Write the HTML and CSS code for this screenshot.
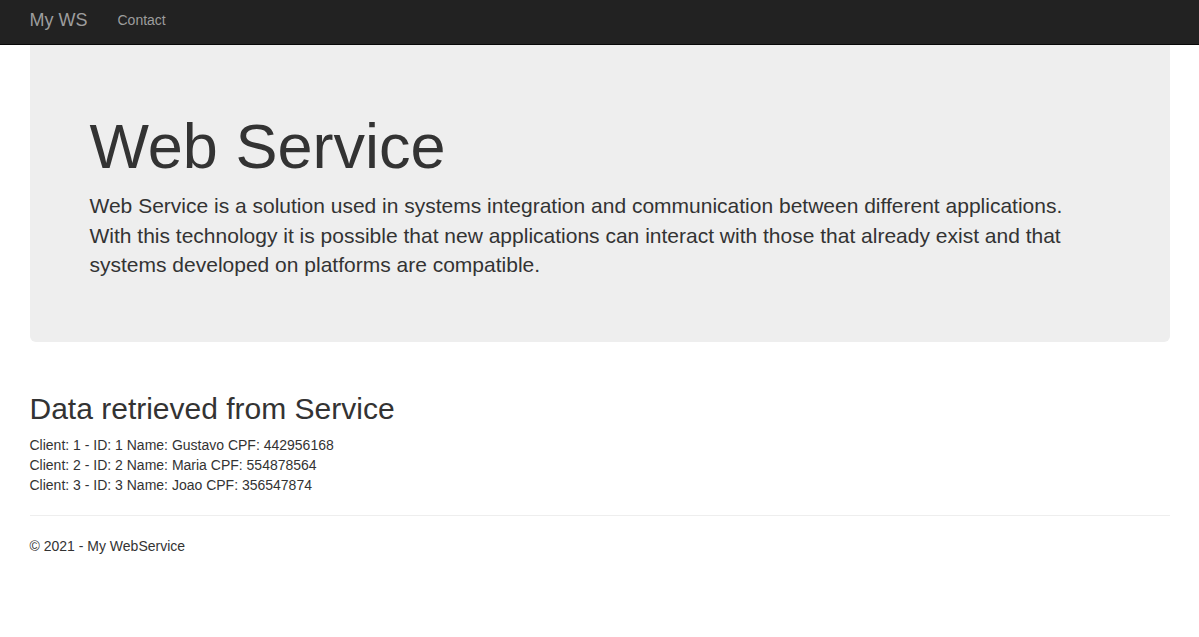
FILE: index.html
```html
<!DOCTYPE html>
<html>
<head>
<meta charset="utf-8">
<title>My WS</title>
<link rel="stylesheet" href="styles.css">
</head>
<body>
<nav class="navbar">
  <div class="container nav-inner">
    <a class="brand" href="#">My WS</a>
    <a class="nav-link" href="#">Contact</a>
  </div>
</nav>
<div class="container body-content">
  <div class="jumbotron">
    <h1>Web Service</h1>
    <p class="lead">Web Service is a solution used in systems integration and communication between different applications. With this technology it is possible that new applications can interact with those that already exist and that systems developed on platforms are compatible.</p>
  </div>
  <section class="data">
    <h2>Data retrieved from Service</h2>
    <div class="clients">
      <div>Client: 1 - ID: 1 Name: Gustavo CPF: 442956168</div>
      <div>Client: 2 - ID: 2 Name: Maria CPF: 554878564</div>
      <div>Client: 3 - ID: 3 Name: Joao CPF: 356547874</div>
    </div>
  </section>
  <hr class="rule">
  <footer class="footer">
    <p>&copy; 2021 - My WebService</p>
  </footer>
</div>
</body>
</html>
```

FILE: styles.css
```css
* { box-sizing: border-box; }
html, body { margin: 0; padding: 0; }
body {
  font-family: "Liberation Sans", Arial, Helvetica, sans-serif;
  font-size: 14px;
  line-height: 20px;
  color: #333;
  background: #fff;
}
.container {
  width: 1170px;
  margin: 0 auto;
  padding: 0 15px;
}
.navbar {
  background: #222;
  border-bottom: 1px solid #080808;
  height: 45px;
}
.nav-inner {
  display: flex;
  align-items: flex-start;
  padding-left: 15px;
}
.brand {
  font-size: 18px;
  line-height: 20px;
  padding: 10px 15px 14px 0;
  color: #9d9d9d;
  text-decoration: none;
}
.nav-link {
  font-size: 14px;
  line-height: 20px;
  padding: 10px 15px;
  color: #9d9d9d;
  text-decoration: none;
}
.jumbotron {
  background: #eee;
  border-radius: 0 0 6px 6px;
  padding: 47px 60px 48px;
  margin-bottom: 30px;
}
.jumbotron h1 {
  font-size: 63px;
  line-height: 1.1;
  font-weight: 500;
  margin: 20px 0 10px;
}
.jumbotron .lead {
  font-size: 21px;
  line-height: 1.4;
  font-weight: 300;
  margin: 0 0 15px;
  max-width: 1000px;
}
.data {
  padding-top: 20px;
}
h2 {
  font-size: 30px;
  line-height: 1.1;
  font-weight: 500;
  margin: 0 0 10px;
}
.clients { margin: 0; }
.rule {
  border: 0;
  border-top: 1px solid #eee;
  margin: 20px 0;
}
.footer p { margin: 0 0 10px; }
```
